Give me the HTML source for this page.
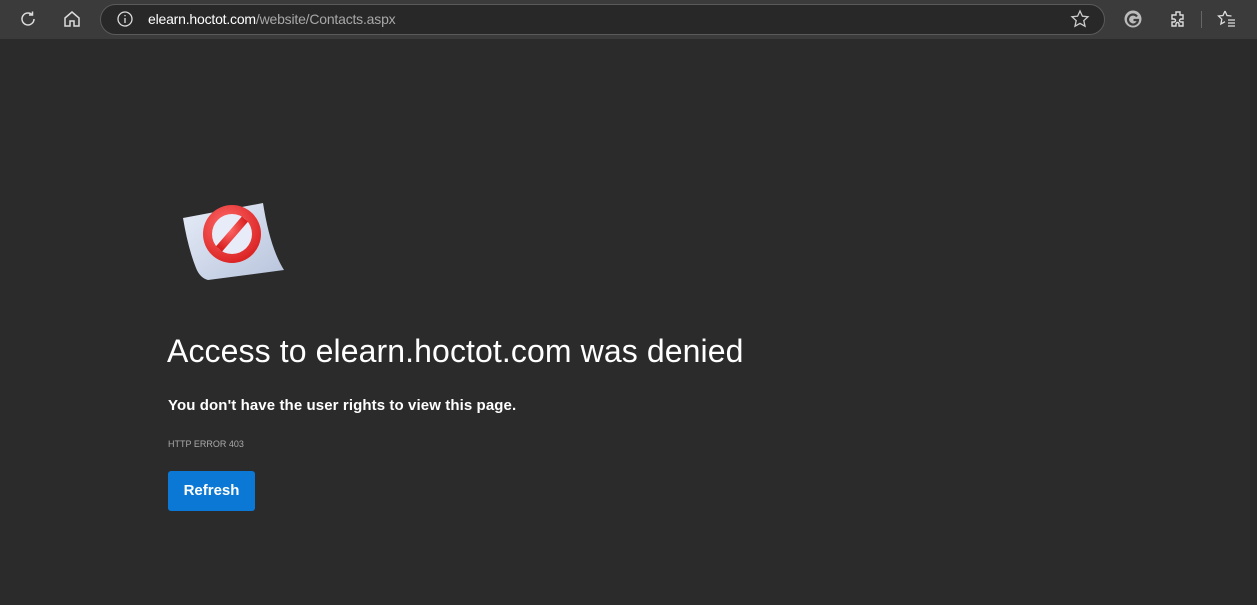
<!DOCTYPE html>
<html><head><style>
body{margin:0;width:1257px;height:605px;background:#2b2b2b;font-family:"Liberation Sans",sans-serif;overflow:hidden;position:relative}
.bar{position:absolute;left:0;top:0;width:1257px;height:39px;background:#3b3b3b}
.url{position:absolute;left:100px;top:4px;width:1003px;height:29px;border:1px solid #5a5a5a;border-radius:16px;background:#282828}
.ut{position:absolute;left:148px;top:11px;font-size:14px;color:#fff;letter-spacing:-0.2px}
.ut span{color:#a8a8a8}
svg{position:absolute}
h1{position:absolute;left:167px;top:333px;margin:0;font-size:32px;font-weight:normal;color:#fff;letter-spacing:0.1px}
.sub{position:absolute;left:168px;top:397px;font-size:15px;font-weight:bold;color:#fff;letter-spacing:0.1px}
.err{position:absolute;left:168px;top:439px;font-size:9px;color:#aaa}
.btn{position:absolute;left:168px;top:471px;width:87px;height:40px;background:#0a78d4;border-radius:3px;color:#fff;font-size:15px;font-weight:bold;text-align:center;line-height:40px}
</style></head><body>
<div class="bar"></div>
<svg style="left:18px;top:9px" width="20" height="20" viewBox="0 0 20 20" fill="none" stroke="#ddd" stroke-width="1.5"><path d="M16 10a6 6 0 1 1-2-4.5"/><path d="M14.5 2.5v3.5h-3.5"/></svg>
<svg style="left:62px;top:9px" width="20" height="20" viewBox="0 0 20 20" fill="none" stroke="#ddd" stroke-width="1.5"><path d="M3 9l7-6 7 6v8h-5v-5h-4v5H3z"/></svg>
<div class="url"></div>
<svg style="left:116px;top:10px" width="18" height="18" viewBox="0 0 18 18" fill="none" stroke="#ddd" stroke-width="1.3"><circle cx="9" cy="9" r="7"/><path d="M9 8v5M9 5v1.2"/></svg>
<div class="ut">elearn.hoctot.com<span>/website/Contacts.aspx</span></div>
<svg style="left:1070px;top:9px" width="20" height="20" viewBox="0 0 20 20" fill="none" stroke="#ccc" stroke-width="1.3"><path d="M10 2l2.4 5.2 5.6.6-4.2 3.8 1.2 5.6L10 14.4 5 17.2l1.2-5.6L2 7.8l5.6-.6z"/></svg>
<svg style="left:1123px;top:9px" width="20" height="20" viewBox="0 0 20 20"><circle cx="10" cy="10" r="8.5" fill="#bbb"/><path d="M14 7.5A5 5 0 1 0 15 11h-4.5" fill="none" stroke="#3b3b3b" stroke-width="2.2"/></svg>
<svg style="left:1168px;top:9px" width="20" height="20" viewBox="0 0 20 20" fill="none" stroke="#ddd" stroke-width="1.4"><path d="M8 3h4v3h3v4h-2a1.5 1.5 0 0 0 0 3h2v4H11v-2a1.5 1.5 0 0 0-3 0v2H4v-4h2a1.5 1.5 0 0 0 0-3H4V6h4z"/></svg>
<div style="position:absolute;left:1201px;top:11px;width:1px;height:17px;background:#666"></div>
<svg style="left:1216px;top:9px" width="22" height="20" viewBox="0 0 22 20" fill="none" stroke="#ddd" stroke-width="1.3"><path d="M9 2l2 4.5 4.5.5M9 2L7 6.5 2.5 7l3.3 3.2-.9 4.8L9 12.7"/><path d="M12 11h7M12 14h7M12 17h7"/></svg>
<svg style="left:178px;top:198px" width="110" height="85" viewBox="0 0 110 85">
<defs><linearGradient id="p" x1="0" y1="0" x2="1" y2="1"><stop offset="0" stop-color="#e6ecf8"/><stop offset="1" stop-color="#b8c4dc"/></linearGradient>
<radialGradient id="r" cx="0.4" cy="0.35" r="0.7"><stop offset="0" stop-color="#ff6a6a"/><stop offset="1" stop-color="#d92020"/></radialGradient></defs>
<path d="M5 20 L85 5 Q92 50 106 72 L30 82 Q22 80 18 70 Q10 50 5 20z" fill="url(#p)"/>
<circle cx="54" cy="36" r="29" fill="url(#r)"/>
<circle cx="54" cy="36" r="20" fill="#e7ecf8"/>
<path d="M41 51 L67 21" stroke="url(#r)" stroke-width="8"/>
</svg>
<h1>Access to elearn.hoctot.com was denied</h1>
<div class="sub">You don't have the user rights to view this page.</div>
<div class="err">HTTP ERROR 403</div>
<div class="btn">Refresh</div>
</body></html>
